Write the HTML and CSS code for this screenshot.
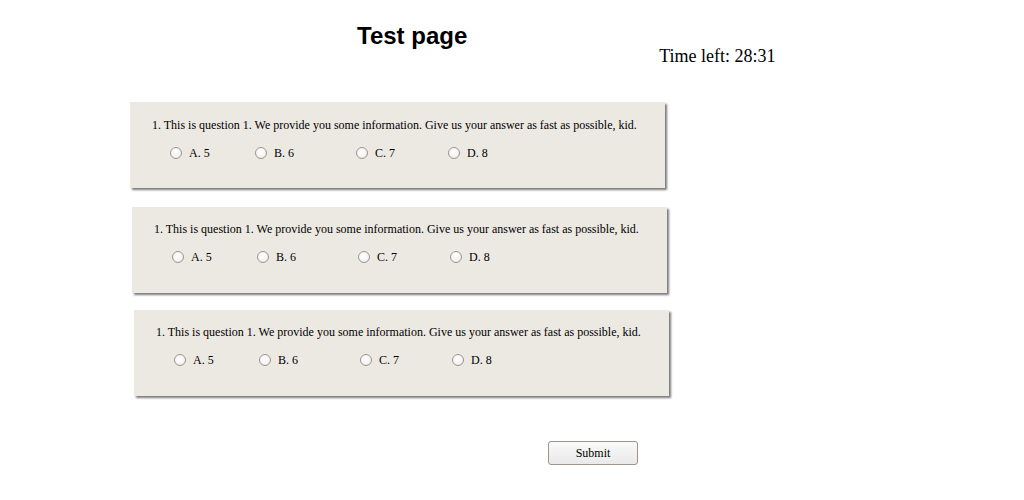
FILE: index.html
```html
<!DOCTYPE html>
<html>
<head>
<meta charset="utf-8">
<title>Test page</title>
<link rel="stylesheet" href="styles.css">
</head>
<body>
<header class="top">
  <h1 class="title">Test page</h1>
  <div class="timer">Time left: 28:31</div>
</header>
<main class="quiz">
  <section class="card card-1">
    <p class="question">1. This is question 1. We provide you some information. Give us your answer as fast as possible, kid.</p>
    <div class="options">
      <label class="opt opt-a"><input type="radio" name="q1"><span>A. 5</span></label>
      <label class="opt opt-b"><input type="radio" name="q1"><span>B. 6</span></label>
      <label class="opt opt-c"><input type="radio" name="q1"><span>C. 7</span></label>
      <label class="opt opt-d"><input type="radio" name="q1"><span>D. 8</span></label>
    </div>
  </section>
  <section class="card card-2">
    <p class="question">1. This is question 1. We provide you some information. Give us your answer as fast as possible, kid.</p>
    <div class="options">
      <label class="opt opt-a"><input type="radio" name="q2"><span>A. 5</span></label>
      <label class="opt opt-b"><input type="radio" name="q2"><span>B. 6</span></label>
      <label class="opt opt-c"><input type="radio" name="q2"><span>C. 7</span></label>
      <label class="opt opt-d"><input type="radio" name="q2"><span>D. 8</span></label>
    </div>
  </section>
  <section class="card card-3">
    <p class="question">1. This is question 1. We provide you some information. Give us your answer as fast as possible, kid.</p>
    <div class="options">
      <label class="opt opt-a"><input type="radio" name="q3"><span>A. 5</span></label>
      <label class="opt opt-b"><input type="radio" name="q3"><span>B. 6</span></label>
      <label class="opt opt-c"><input type="radio" name="q3"><span>C. 7</span></label>
      <label class="opt opt-d"><input type="radio" name="q3"><span>D. 8</span></label>
    </div>
  </section>
  <div class="actions">
    <button class="submit" type="button">Submit</button>
  </div>
</main>
</body>
</html>
```

FILE: styles.css
```css
html, body {
  margin: 0;
  padding: 0;
  background: #ffffff;
  color: #000000;
  font-family: "Liberation Serif", "Times New Roman", serif;
}

.top {
  display: flex;
  align-items: flex-start;
  height: 102px;
}

.title {
  margin: 22px 0 0 357px;
  font-family: "Liberation Sans", Arial, sans-serif;
  font-weight: bold;
  font-size: 24px;
  line-height: 28px;
}

.timer {
  margin: 45px 0 0 192px;
  font-size: 18px;
  line-height: 22px;
}

.quiz {
  display: flex;
  flex-direction: column;
}

.card {
  box-sizing: border-box;
  width: 535px;
  height: 86px;
  background: #ece9e3;
  box-shadow: 2px 2px 2px #7b7b7b;
  padding: 14px 0 0 22px;
}

.card-1 { margin-left: 130px; padding-top: 15px; }
.card-2 { margin-left: 132px; margin-top: 19px; }
.card-3 { margin-left: 134px; margin-top: 17px; }

.question {
  margin: 0;
  font-size: 12px;
  line-height: 16px;
}

.options {
  display: flex;
  margin-top: 12px;
  padding-left: 18px;
  font-size: 12px;
  line-height: 16px;
}

.opt {
  display: flex;
  align-items: center;
}

.opt-a { width: 85px; }
.opt-b { width: 101px; }
.opt-c { width: 92px; }

.opt input {
  appearance: none;
  -webkit-appearance: none;
  box-sizing: border-box;
  width: 12px;
  height: 12px;
  margin: 0 7px 0 0;
  border: 1px solid #9c968f;
  border-radius: 50%;
  background: radial-gradient(circle at 45% 40%, #ffffff 0%, #f6f5f3 55%, #dedad4 100%);
}

.actions {
  display: flex;
  padding: 45px 0 0 548px;
}

.submit {
  box-sizing: border-box;
  width: 90px;
  height: 24px;
  border: 1px solid #a0948a;
  border-radius: 3px;
  background: linear-gradient(#fafafa, #e9e9e9);
  font-family: "Liberation Serif", "Times New Roman", serif;
  font-size: 12px;
  color: #000;
  padding: 0;
}
```
